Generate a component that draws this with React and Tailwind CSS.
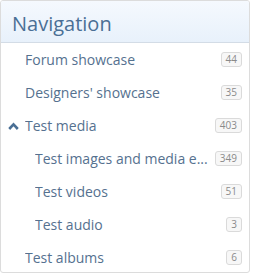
const items = [
  { label: 'Forum showcase', count: 44, depth: 0 },
  { label: "Designers' showcase", count: 35, depth: 0 },
  { label: 'Test media', count: 403, depth: 0, open: true },
  { label: 'Test images and media e...', count: 349, depth: 1 },
  { label: 'Test videos', count: 51, depth: 1 },
  { label: 'Test audio', count: 3, depth: 1 },
  { label: 'Test albums', count: 6, depth: 0 },
];

export default function App() {
  return (
    <div className="w-[253px] h-[275px] bg-white" style={{ fontFamily: '"Open Sans", "Noto Sans", sans-serif' }}>
      <div className="w-[250px] h-[273px] border border-[#dcdcdc] rounded-[3px] overflow-hidden">
        {/* 标题 */}
        <div className="h-[42px] border-b border-[#d3dce6] bg-gradient-to-b from-[#f5f9fe] to-[#e8f1fb] pl-[11px] pt-[5px] flex items-center">
          <h3 className="text-[20px] text-[#4a6f95] leading-none">Navigation</h3>
        </div>
        <ul>
          {items.map((it, i) => (
            <li key={i} className="h-[33px] flex items-center pr-[7px]">
              <div className={`shrink-0 flex justify-start pl-[7px] ${it.depth ? 'w-[34px]' : 'w-[24px]'}`}>
                {it.open && (
                  <svg width="11" height="8" viewBox="0 0 11 8">
                    <path d="M1.2 7 L5.5 2.4 L9.8 7" fill="none" stroke="#4a6f95" strokeWidth="2.6" />
                  </svg>
                )}
              </div>
              <span className="flex-1 text-[14px] text-[#55718f] whitespace-nowrap overflow-hidden">{it.label}</span>
              <span className="ml-1 h-[15px] px-[4px] rounded-[3px] border border-[#dadada] bg-[#f7f7f7] text-[10px] leading-[13px] text-[#8a8a8a]">
                {it.count}
              </span>
            </li>
          ))}
        </ul>
      </div>
    </div>
  );
}
